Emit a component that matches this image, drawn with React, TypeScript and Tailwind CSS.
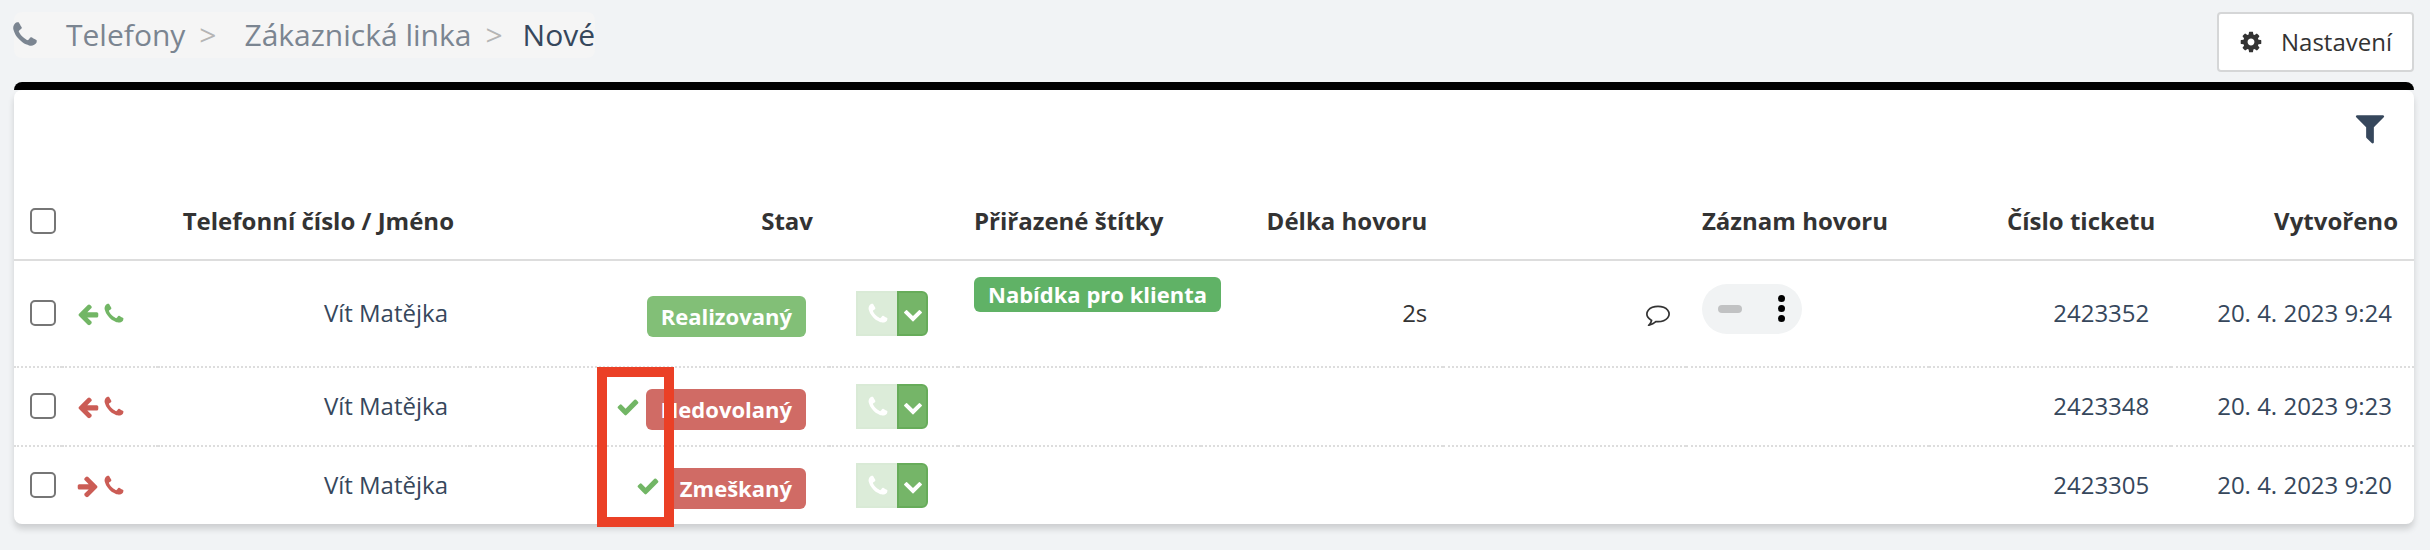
import React from "react";

const icons = {
  phone:
    "M1600 1240q0 27-10 70.5t-21 68.5q-21 50-122 106-94 51-186 51-27 0-52.5-3.5t-57.5-12.5-47.5-14.5-55.5-20.5-49-18q-98-35-175-83-128-79-264.5-215.5t-215.5-264.5q-48-77-83-175-3-9-18-49t-20.5-55.5-14.5-47.5-12.5-57.5-3.5-52.5q0-92 51-186 56-101 106-122 25-11 68.5-21t70.5-10q14 0 21 3 18 6 53 76 11 19 30 54t35 63.5 31 53.5q3 4 17.5 25t21.5 35.5 7 28.5q0 20-28.5 50t-62 55-62 53-28.5 46q0 9 5 22.5t8.5 20.5 14 24 11.5 19q76 137 174 235t235 174q2 1 19 11.5t24 14 20.5 8.5 22.5 5q18 0 46-28.5t53-62 55-62 50-28.5q14 0 28.5 7t35.5 21.5 25 17.5q25 15 53.5 31t63.5 35 54 30q70 35 76 53 3 7 3 21z",
  check:
    "M1671 566q0 40-28 68l-724 724-136 136q-28 28-68 28t-68-28l-136-136-362-362q-28-28-28-68t28-68l136-136q28-28 68-28t68 28l294 295 656-657q28-28 68-28t68 28l136 136q28 28 28 68z",
  cog: "M1152 896q0-106-75-181t-181-75-181 75-75 181 75 181 181 75 181-75 75-181zm512-109v222q0 12-8 23t-20 13l-185 28q-19 54-39 91 35 50 107 138 10 12 10 25t-9 23q-27 37-99 108t-94 71q-12 0-26-9l-138-108q-44 23-91 38-16 136-29 186-7 28-36 28h-222q-14 0-24.5-8.5t-11.5-21.5l-28-184q-49-16-90-37l-141 107q-10 9-25 9-14 0-25-11-126-114-165-168-7-10-7-23 0-12 8-23 15-21 51-66.5t54-70.5q-27-50-41-99l-183-27q-13-2-21-12.5t-8-23.5v-222q0-12 8-23t19-13l186-28q14-46 39-92-40-57-107-138-10-12-10-24 0-10 9-23 26-36 98.5-107.5t94.5-71.5q13 0 26 10l138 107q44-23 91-38 16-136 29-186 7-28 36-28h222q14 0 24.5 8.5t11.5 21.5l28 184q49 16 90 37l142-107q9-9 24-9 13 0 25 10 129 119 165 170 7 8 7 22 0 12-8 23-15 21-51 66.5t-54 70.5q26 50 41 98l183 28q13 2 21 12.5t8 23.5z",
  filter:
    "M1595 295q17 41-14 70l-493 493v742q0 42-39 59-13 5-25 5-27 0-45-19l-256-256q-19-19-19-45v-486l-493-493q-31-29-14-70 17-39 59-39h1280q42 0 59 39z",
  arrowLeft:
    "M1664 896v128q0 53-32.5 90.5t-84.5 37.5h-704l293 294q38 36 38 90t-38 90l-75 76q-37 37-90 37-52 0-91-37l-651-652q-37-37-37-90 0-52 37-91l651-650q38-38 91-38 52 0 90 38l75 74q38 38 38 91t-38 91l-293 293h704q52 0 84.5 37.5t32.5 90.5z",
  arrowRight:
    "M1600 960q0 54-37 91l-651 651q-39 37-91 37-51 0-90-37l-75-75q-38-38-38-91t38-91l293-293h-704q-52 0-84.5-37.5t-32.5-90.5v-128q0-53 32.5-90.5t84.5-37.5h704l-293-294q-38-36-38-90t38-90l75-75q38-38 90-38 53 0 91 38l651 651q37 35 37 90z",
  chevronDown:
    "M1683 808l-742 741q-19 19-45 19t-45-19l-742-741q-19-19-19-45.5t19-45.5l166-165q19-19 45-19t45 19l531 531 531-531q19-19 45-19t45 19l166 165q19 19 19 45.5t-19 45.5z",
  comment:
    "M896 384q-204 0-381.5 69.5t-282 187.5-104.5 255q0 112 71.5 213.5t201.5 175.5l87 50-27 96q-24 91-70 172 152-63 275-171l43-38 57 6q69 8 130 8 204 0 381.5-69.5t282-187.5 104.5-255-104.5-255-282-187.5-381.5-69.5zm896 512q0 174-120 321.5t-326 233-450 85.5q-70 0-145-8-198 175-460 242-49 14-114 22h-5q-15 0-27-10.5t-16-27.5v-1q-3-4-.5-12t2-10 4.5-9.5l6-9 7-8.5 8-9q7-8 31-34.5t34.5-38 31-39.5 32.5-51 27-59 26-76q-157-89-247.5-220t-90.5-281q0-174 120-321.5t326-233 450-85.5 450 85.5 326 233 120 321.5z",
};

type IconName = keyof typeof icons;

const Icon = ({
  name,
  className = "size-6",
}: {
  name: IconName;
  className?: string;
}) => (
  <svg
    viewBox="0 0 1792 1792"
    fill="currentColor"
    aria-hidden="true"
    className={`shrink-0 ${className}`}
  >
    <path d={icons[name]} />
  </svg>
);

interface Call {
  id: string;
  name: string;
  direction: "arrowLeft" | "arrowRight";
  success: boolean;
  status: string;
  resolved?: boolean;
  tag?: string;
  duration?: string;
  created: string;
}

const calls: Call[] = [
  {
    id: "2423352",
    name: "Vít Matějka",
    direction: "arrowLeft",
    success: true,
    status: "Realizovaný",
    tag: "Nabídka pro klienta",
    duration: "2s",
    created: "20. 4. 2023 9:24",
  },
  {
    id: "2423348",
    name: "Vít Matějka",
    direction: "arrowLeft",
    success: false,
    status: "Nedovolaný",
    resolved: true,
    created: "20. 4. 2023 9:23",
  },
  {
    id: "2423305",
    name: "Vít Matějka",
    direction: "arrowRight",
    success: false,
    status: "Zmeškaný",
    resolved: true,
    created: "20. 4. 2023 9:20",
  },
];

const Checkbox = ({ label }: { label: string }) => (
  <input
    type="checkbox"
    aria-label={label}
    className="block size-[26px] appearance-none rounded-[5px] border-2 border-[#767676] bg-white checked:bg-[#36475c]"
  />
);

const Breadcrumb = () => (
  <nav
    aria-label="Navigace"
    className="flex h-[46px] items-center rounded-lg bg-[#f5f5f5] text-[30px] leading-[46px] text-[#7b8591]"
  >
    <Icon name="phone" className="-ml-1 mr-[26px] size-[30px]" />
    <a href="#telefony">Telefony</a>
    <span className="ml-3.5 mr-7 text-[#b5b5b5]">&gt;</span>
    <a href="#linka">Zákaznická linka</a>
    <span className="ml-3.5 mr-5 text-[#b5b5b5]">&gt;</span>
    <a href="#nove" className="text-[#36475c]">
      Nové
    </a>
  </nav>
);

const CallRow = ({ call, last }: { call: Call; last: boolean }) => {
  const line = last ? "" : "border-b-2 border-dotted border-[#dddddd]";
  return (
    <tr className={call.tag ? "h-[107px]" : last ? "h-[77px]" : "h-[79px]"}>
      <td className={`pb-0.5 pl-4 ${line}`}>
        <Checkbox label={`Vybrat hovor ${call.id}`} />
      </td>
      <td className={`pl-3.5 ${line}`}>
        <div
          className={`flex items-center gap-0.5 ${call.success ? "text-[#72b665]" : "text-[#cb5c55]"}`}
        >
          <Icon name={call.direction} />
          <Icon name="phone" />
        </div>
      </td>
      <td className={`pb-0.5 pr-[22px] text-right ${line}`}>
        <a href="#kontakt" className="text-[#36475c]">
          {call.name}
        </a>
      </td>
      <td className={`pr-[23px] ${line}`}>
        <div className="flex items-center justify-end gap-1.5">
          {call.resolved && <Icon name="check" className="size-6 text-[#72b665]" />}
          <span
            className={`mt-1.5 rounded-md px-3.5 text-[22px] font-bold leading-[41px] text-white ${call.success ? "bg-[#82bf77]" : "bg-[#d06b65]"}`}
          >
            {call.status}
          </span>
        </div>
      </td>
      <td className={`pl-[27px] ${line}`}>
        <div className="flex h-[45px] text-white">
          <button
            type="button"
            disabled
            aria-label="Zavolat"
            className="flex w-[41px] items-center justify-center border-2 border-r-0 border-[#d9ead6] bg-[#dcecd9]"
          >
            <Icon name="phone" />
          </button>
          <button
            type="button"
            aria-label="Další možnosti"
            className="flex w-[31px] items-center justify-center rounded-r-md border-2 border-[#67ac5a] bg-[#75b568]"
          >
            <Icon name="chevronDown" className="size-5" />
          </button>
        </div>
      </td>
      <td className={`whitespace-nowrap px-4 align-top ${line}`}>
        {call.tag && (
          <span className="mt-4 inline-block rounded-md bg-[#60b266] px-3.5 text-[22px] font-bold leading-[35px] text-white">
            {call.tag}
          </span>
        )}
      </td>
      <td className={`px-4 pb-0.5 text-right ${line}`}>{call.duration}</td>
      <td className={`px-4 ${line}`}>
        {call.duration && (
          <button type="button" aria-label="Komentář" className="ml-auto block">
            <Icon name="comment" />
          </button>
        )}
      </td>
      <td className={`px-4 ${line}`}>
        {call.duration && (
          <div className="mb-2.5 flex h-[50px] w-[100px] items-center justify-between rounded-[25px] bg-[#f1f3f4] px-4">
            <span className="h-2 w-6 rounded bg-[#c1c2c3]" />
            <button
              type="button"
              aria-label="Možnosti přehrávání"
              className="flex w-2 flex-col items-center gap-[3px]"
            >
              <span className="size-[7px] rounded-full bg-black" />
              <span className="size-[7px] rounded-full bg-black" />
              <span className="size-[7px] rounded-full bg-black" />
            </button>
          </div>
        )}
      </td>
      <td className={`pb-0.5 pr-[22px] text-right ${line}`}>
        <a href="#ticket" className="text-[#36475c]">
          {call.id}
        </a>
      </td>
      <td
        className={`whitespace-nowrap pb-0.5 pr-[22px] text-right text-[#36475c] ${line}`}
      >
        {call.created}
      </td>
    </tr>
  );
};

const CallTable = () => (
  <table className="w-full table-fixed border-separate border-spacing-0 text-[24px] leading-8">
    <colgroup>
      <col className="w-[48px]" />
      <col className="w-[96px]" />
      <col className="w-[312px]" />
      <col className="w-[359px]" />
      <col className="w-[129px]" />
      <col span={6} />
    </colgroup>
    <thead>
      <tr className="h-[78px] whitespace-nowrap [&>*]:border-b-2 [&>*]:border-[#dddddd] [&>*]:px-4">
        <td>
          <Checkbox label="Vybrat vše" />
        </td>
        <td />
        <th className="text-right">Telefonní číslo / Jméno</th>
        <th className="text-right">Stav</th>
        <td />
        <th className="text-left">Přiřazené štítky</th>
        <th className="text-right">Délka hovoru</th>
        <td />
        <th className="text-left">Záznam hovoru</th>
        <th className="text-right">Číslo ticketu</th>
        <th className="text-right">Vytvořeno</th>
      </tr>
    </thead>
    <tbody>
      {calls.map((call, i) => (
        <CallRow key={call.id} call={call} last={i === calls.length - 1} />
      ))}
    </tbody>
  </table>
);

const App = () => {
  return (
    <div className="min-h-screen bg-[#f1f3f5] pb-6 pl-3.5 pr-4 pt-3 font-['Open_Sans',sans-serif] text-[#333333]">
      <header className="flex items-start justify-between pb-2.5">
        <Breadcrumb />
        <button
          type="button"
          className="flex h-[60px] items-center gap-[18px] rounded border-2 border-[#d5d6d7] bg-white px-5 text-[24px]"
        >
          <Icon name="cog" />
          Nastavení
        </button>
      </header>

      <main className="rounded-t-lg border-t-8 border-black">
        <section className="relative rounded-lg bg-white shadow-[0_5px_6px_rgba(0,0,0,0.15)]">
          <div className="flex h-[93px] justify-end pr-[26px] pt-5">
            <button type="button" aria-label="Filtr" className="h-9 text-[#36475c]">
              <Icon name="filter" className="size-9" />
            </button>
          </div>
          <CallTable />
          {/* highlight around the resolved marks */}
          <div className="pointer-events-none absolute left-[583px] top-[277px] h-[160px] w-[77px] border-10 border-[#eb4026]" />
        </section>
      </main>
    </div>
  );
};

export default App;
